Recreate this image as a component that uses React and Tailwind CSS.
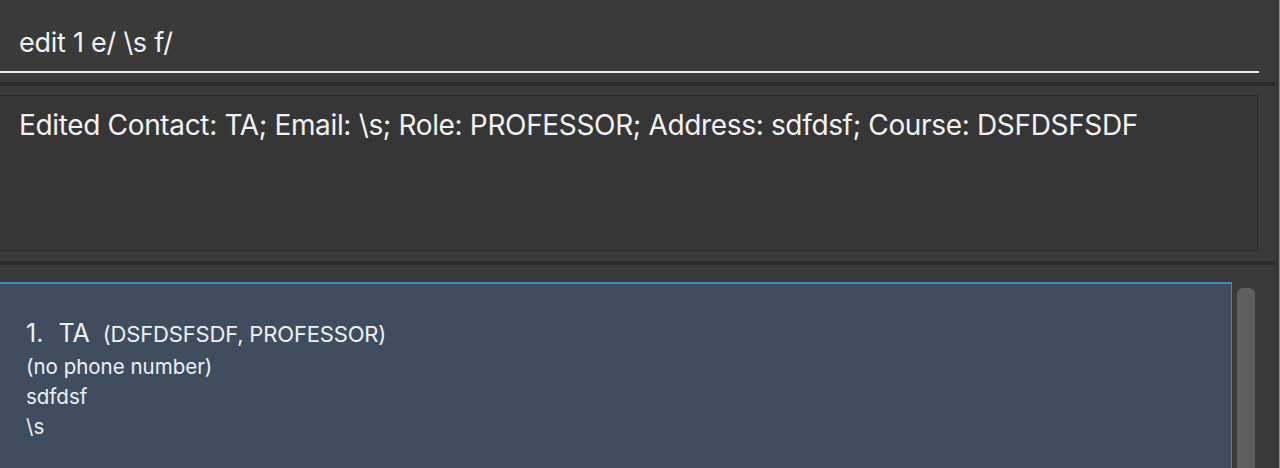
export default function App() {
  return (
    <div
      className="w-[1280px] h-[468px] overflow-hidden bg-[#3a3a3a] flex text-[#f2f2f2]"
      style={{ fontFamily: "Inter, 'Noto Sans', sans-serif" }}
    >
      <div className="flex-1 flex flex-col">
        {/* command box */}
        <div className="h-[82px] flex flex-col">
          <div className="h-[71px] pl-[19px] pt-[26px] text-[27px] leading-[34px] tracking-[-0.25px]">
            edit 1 e/ \s f/
          </div>
          <div className="h-[2px] w-[1259px] bg-[#ececec]" />
        </div>
        <div className="h-[4px] w-[1275px] bg-[#2c2c2c]" />
        {/* result box */}
        <div className="pt-[9px] pb-[10px] w-[1258px]">
          <div className="h-[156px] border border-l-0 border-[#2a2a2a] bg-[#363636] pl-[19px] pt-[12px] text-[28px] tracking-[-0.34px] leading-[34px]">
            Edited Contact: TA; Email: \s; Role: PROFESSOR; Address: sdfdsf; Course: DSFDSFSDF
          </div>
        </div>
        <div className="h-[4px] w-[1275px] bg-[#2c2c2c]" />
        {/* list */}
        <div className="flex pt-[17px] flex-1">
          <div className="w-[1232px] border-t-2 border-r border-[#3a8db3] bg-[#3f4d5f] pl-[26px] pt-[34px] text-[#eef1f4]">
            <div className="h-[34px] flex items-baseline leading-[30px]">
              <span className="text-[25px]">1.</span>
              <span className="text-[25px] ml-[15px]">TA</span>
              <span className="text-[22px] ml-[13px] tracking-[-0.16px]">(DSFDSFSDF, PROFESSOR)</span>
            </div>
            <div className="text-[20.5px] leading-[30px]">(no phone number)</div>
            <div className="text-[20.5px] leading-[30px]">sdfdsf</div>
            <div className="text-[20.5px] leading-[30px]">\s</div>
          </div>
          <div className="ml-[5px] mt-[6px] w-[18px] rounded-t-[6px] bg-[#5f5f5f]" />
        </div>
      </div>
      <div className="w-[1px] bg-[#2e2e2e]" />
      <div className="w-[2px] bg-[#3a3a3a]" />
      <div className="w-[1px] bg-[#8a8a8a]" />
    </div>
  );
}
